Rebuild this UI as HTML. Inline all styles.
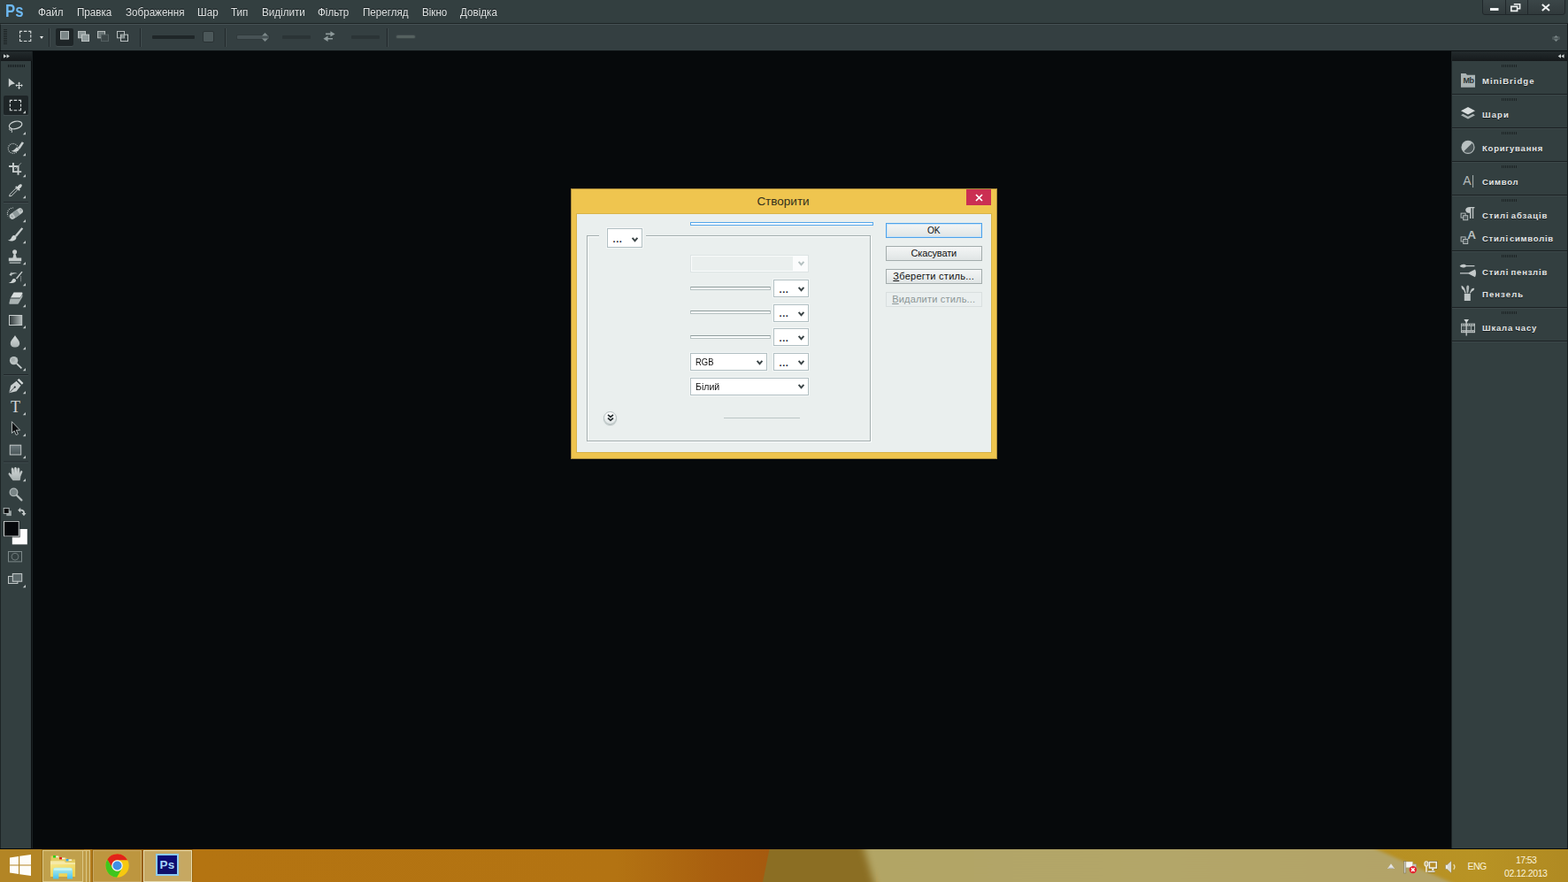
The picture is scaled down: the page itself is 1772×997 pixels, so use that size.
<!DOCTYPE html>
<html lang="uk">
<head>
<meta charset="utf-8">
<title>Створити</title>
<style>
*{box-sizing:border-box;margin:0;padding:0}
html,body{width:1772px;height:997px;overflow:hidden;background:#06090b}
body{position:relative;font-family:"Liberation Sans","DejaVu Sans",sans-serif;font-size:12px;color:#d9dddd}
.abs{position:absolute}
svg{position:absolute;overflow:visible}
/* ---------- menu bar ---------- */
#menubar{position:absolute;left:0;top:0;width:1772px;height:26px;background:#333f40}
#menubar .ps{position:absolute;left:5.700px;top:-0.200px;font-weight:bold;font-size:19.500px;line-height:24px;color:#6db8f1;transform:scaleX(.86);transform-origin:0 0}
#menubar .mi{position:absolute;top:7px;height:15px;line-height:15px;font-size:12.200px;color:#dfe3e3;text-shadow:0 -1px 0 #161b1d;white-space:nowrap;transform:scaleX(.955);transform-origin:0 0}
#menuline{position:absolute;left:0;top:26px;width:1772px;height:1px;background:#1d2425}
#winctl{position:absolute;left:1674.500px;top:-1px;width:94px;height:18px;border:1px solid #20272a;border-radius:0 0 3px 3px;background:linear-gradient(#3b4648,#313a3c)}
#winctl i{position:absolute;top:0;width:1px;height:16px;background:#20272a}
/* ---------- options bar ---------- */
#optbar{position:absolute;left:0;top:27px;width:1772px;height:30px;background:#343f41;border-top:1px solid #465154;border-left:1px solid #1d2425;border-right:1px solid #1d2425}
#optline{position:absolute;left:0;top:57px;width:1772px;height:1px;background:#0c1012}
.osep{position:absolute;top:32px;width:1px;height:21px;background:#20272a;box-shadow:1px 0 0 #414c4e}
.obar{position:absolute;top:40px;height:4px;background:#262e30;border-radius:1px}
/* ---------- tool panel ---------- */
#tools{position:absolute;left:0;top:58px;width:35px;height:901px;background:#333f40;border-left:1px solid #1d2425;box-shadow:1px 0 0 #0b0f11,2px 0 0 #192022}
#tools .hd{position:absolute;left:0;top:0;width:35px;height:11px;background:linear-gradient(#232b2d,#15191b)}
.tsep{position:absolute;left:4px;width:27px;height:1px;background:#20272a;box-shadow:0 1px 0 #424d4f}
.tri{position:absolute;width:0;height:0;border-left:3px solid transparent;border-bottom:3px solid #b9c0c0}
/* ---------- right panel ---------- */
#rpanel{position:absolute;left:1640px;top:58px;width:132px;height:901px;background:#333f40;border-left:1px solid #1d2425}
#rpanel .hd{position:absolute;left:0;top:0;width:131px;height:11px;background:linear-gradient(#232b2d,#15191b)}
.rsep{position:absolute;left:0;width:131px;height:1px;background:#1d2425;box-shadow:0 1px 0 #3f4a4c}
.grip{position:absolute;height:3px;background:repeating-linear-gradient(90deg,#1d2425 0,#1d2425 1px,transparent 1px,transparent 2px)}
.rl{position:absolute;left:35px;height:12px;line-height:12px;font-size:9.500px;font-weight:bold;letter-spacing:1px;color:#e3e6e6;white-space:nowrap;text-shadow:0 1px 0 #1a2022}
/* ---------- taskbar ---------- */
#taskbar{position:absolute;left:0;top:960px;width:1772px;height:37px;background:#b37412;overflow:hidden}
.tb{position:absolute;top:0;height:37px;border:1px solid #dcc888;background:#c0a04c;box-shadow:0 0 0 1px rgba(110,75,0,.35)}
.tray{position:absolute;color:#fbf3dc;font-size:11px;line-height:12px;white-space:nowrap}
/* ---------- dialog ---------- */
#dlg{position:absolute;left:645px;top:213px;width:482px;height:306px;background:#efc54f;border:1px solid #a98a3a}
.dtitle{font-size:13.500px;line-height:18px;color:#33301c;white-space:nowrap}
.sel{position:absolute;height:20px;background:#fff;border:1px solid #b1bfc2;box-shadow:0 0 0 1px #f3f6f6}
.thin{position:absolute;height:4px;background:#fbfdfd;border:1px solid #b7c2c2;border-top-color:#8f9c9c}
.dots{font-size:11px;line-height:14px;font-weight:bold;color:#1a1a2a;letter-spacing:0.600px}
.dtxt{font-size:11px;line-height:14px;color:#111;white-space:nowrap}
.btn{position:absolute;left:1001px;width:108.500px;height:16.500px;border:1px solid #a3acac;background:linear-gradient(#f4f6f6,#e0e5e5);font-size:11px;line-height:14px;text-align:center;color:#111;white-space:nowrap}
.btn span{display:inline-block;position:relative;top:0}
</style>
</head>
<body>

<!-- ================= MENU BAR ================= -->
<div id="menubar">
  <div class="ps">Ps</div>
  <div class="mi" style="left:43px">Файл</div>
  <div class="mi" style="left:87px">Правка</div>
  <div class="mi" style="left:142px">Зображення</div>
  <div class="mi" style="left:223px">Шар</div>
  <div class="mi" style="left:261px">Тип</div>
  <div class="mi" style="left:296px">Виділити</div>
  <div class="mi" style="left:359px">Фільтр</div>
  <div class="mi" style="left:410px">Перегляд</div>
  <div class="mi" style="left:477px">Вікно</div>
  <div class="mi" style="left:520px">Довідка</div>
  <div id="winctl"><i style="left:25px"></i><i style="left:50px"></i></div>
  <svg style="left:1683.500px;top:8.800px" width="10" height="3" viewBox="0 0 10 3"><rect width="9.500" height="3" fill="#eef1f1"/></svg>
  <svg style="left:1707px;top:4px" width="12" height="9" viewBox="0 0 12 9"><path d="M3.800 0.800h6.800v5h-2.200M0.800 3.400h6.800v5H0.800Z" fill="none" stroke="#eef1f1" stroke-width="1.600"/></svg>
  <svg style="left:1742px;top:5px" width="10" height="7" viewBox="0 0 10 7"><path d="M0.800 0L9 7M9 0L0.800 7" stroke="#eef1f1" stroke-width="2"/></svg>
</div>
<div id="menuline"></div>

<!-- ================= OPTIONS BAR ================= -->
<div id="optbar"></div>
<div id="optline"></div>

<!-- gripper -->
<div class="abs" style="left:4px;top:33px;width:4px;height:18px;background:repeating-linear-gradient(180deg,#1d2425 0,#1d2425 1px,transparent 1px,transparent 2px)"></div>
<!-- marquee tool preset -->
<svg style="left:22px;top:34px" width="14" height="14" viewBox="0 0 14 14"><path d="M0.55 3.90V1.30H3.15M10.15 1.30H12.75V3.90M12.75 9.90V12.50H10.15M3.15 12.50H0.55V9.90M4.85 1.30H8.45M4.85 12.50H8.45M0.55 5.30V8.50M12.75 5.30V8.50" fill="none" stroke="#d4d9d9" stroke-width="1.150"/></svg>
<div class="abs" style="left:45px;top:41px;width:0;height:0;border-left:2.5px solid transparent;border-right:2.5px solid transparent;border-top:3px solid #e8ebeb"></div>
<div class="osep" style="left:55px"></div>
<!-- selection mode buttons -->
<div class="abs" style="left:63px;top:32px;width:20px;height:20px;background:#1e2527;border-radius:2px;box-shadow:0 1px 0 #434e50"></div>
<svg style="left:68px;top:35px" width="10" height="9.600" viewBox="0 0 10 10" preserveAspectRatio="none"><rect x="0.5" y="0.5" width="9" height="9" fill="#7b8687" stroke="#b9c0c0"/></svg>
<svg style="left:88px;top:35px" width="13" height="12" viewBox="0 0 13 13" preserveAspectRatio="none"><rect x="0.5" y="0.5" width="8" height="8" fill="#8a9596" stroke="#b9c0c0"/><rect x="4.5" y="4.5" width="8" height="8" fill="#8f9a9b" stroke="#c3c9c9"/></svg>
<svg style="left:110px;top:35px" width="13" height="12" viewBox="0 0 13 13" preserveAspectRatio="none"><rect x="0.5" y="0.5" width="8" height="8" fill="#6c7778" stroke="#b9c0c0"/><rect x="4.5" y="4.500" width="8" height="8" fill="#3c4648" stroke="#566163"/></svg>
<svg style="left:132px;top:35px" width="13" height="12" viewBox="0 0 13 13" preserveAspectRatio="none"><rect x="0.5" y="0.5" width="8" height="8" fill="none" stroke="#b9c0c0"/><rect x="4.5" y="4.5" width="8" height="8" fill="none" stroke="#c3c9c9"/><rect x="5" y="5" width="3.5" height="3.5" fill="#7f8a8b"/></svg>
<div class="osep" style="left:158px"></div>
<div class="obar" style="left:172px;width:48px;background:#1f2628"></div>
<div class="abs" style="left:229px;top:35px;width:13px;height:13px;background:#4c585a;border:1px solid #2a3234;border-radius:2px"></div>
<div class="osep" style="left:254px"></div>
<div class="obar" style="left:268px;width:36px;background:#475255;box-shadow:0 0 0 1px #303a3c"></div>
<svg style="left:296px;top:37px" width="7" height="10" viewBox="0 0 7 10"><path d="M3.5 0L7 3.5H0Z M3.5 10L7 6.5H0Z" fill="#7e8a8b"/></svg>
<div class="obar" style="left:319px;width:32px;background:#2b3436"></div>
<svg style="left:365px;top:35px" width="14" height="12" viewBox="0 0 14 12"><path d="M3 2.600H8.400V0.200L13.600 3.400L8.400 6.600V4.200H3Z" fill="#8e9a9b"/><path d="M11 8H5.600V5.600L0.400 8.800L5.600 12V9.600H11Z" fill="#8e9a9b"/></svg>
<div class="obar" style="left:397px;width:32px;background:#2b3436"></div>
<div class="osep" style="left:437px"></div>
<div class="obar" style="left:448px;width:21px;background:#55615f;border-radius:2px;top:40px;height:3px;box-shadow:0 0 0 1px #3d4749"></div>
<svg style="left:1754px;top:40px" width="9" height="7" viewBox="0 0 9 7"><rect x="0" y="1" width="9" height="4" rx="1.5" fill="#4c5759"/><path d="M4.5 0L7 2.5H2Z M4.5 7L7 4.5H2Z" fill="#7d898a"/></svg>


<!-- ================= TOOLS ================= -->
<div id="tools"><div class="hd"></div>
</div>

<svg id="ticons" style="left:0;top:0" width="40" height="700" viewBox="0 0 40 700">
<defs>
<linearGradient id="gI" x1="0" y1="0" x2="0" y2="1"><stop offset="0" stop-color="#d9dede"/><stop offset="1" stop-color="#a9b2b2"/></linearGradient>
<linearGradient id="gGrad" x1="0" y1="0" x2="1" y2="0"><stop offset="0" stop-color="#2c3537"/><stop offset="1" stop-color="#b4bcbc"/></linearGradient>
<linearGradient id="gRect" x1="0" y1="0" x2="0" y2="1"><stop offset="0" stop-color="#69767a"/><stop offset="1" stop-color="#4a5658"/></linearGradient>
</defs>
<!-- collapse arrows -->
<path d="M4 61.3L7.3 63.5L4 65.7Z M7.6 61.3L10.9 63.5L7.6 65.7Z" fill="#cdd3d3"/>
<!-- gripper -->
<path d="M9.5 73v3M11.5 73v3M13.5 73v3M15.5 73v3M17.5 73v3M19.5 73v3M21.5 73v3M23.5 73v3M25.5 73v3M27.5 73v3" stroke="#171d1f" stroke-width="1"/>
<!-- selected tool bg -->
<rect x="4" y="108" width="28" height="22" rx="2" fill="#1e2527"/>
<rect x="4" y="130" width="28" height="1" fill="#424d4f"/>
<path d="M29 125V128.2H25.8Z" fill="#c3c9c9"/><path d="M29 149V152.2H25.8Z" fill="#c3c9c9"/><path d="M29 173V176.2H25.8Z" fill="#c3c9c9"/><path d="M29 197V200.2H25.8Z" fill="#c3c9c9"/><path d="M29 221V224.2H25.8Z" fill="#c3c9c9"/><path d="M29 248V251.2H25.8Z" fill="#c3c9c9"/><path d="M29 272V275.2H25.8Z" fill="#c3c9c9"/><path d="M29 296V299.2H25.8Z" fill="#c3c9c9"/><path d="M29 320V323.2H25.8Z" fill="#c3c9c9"/><path d="M29 344V347.2H25.8Z" fill="#c3c9c9"/><path d="M29 368V371.2H25.8Z" fill="#c3c9c9"/><path d="M29 392V395.2H25.8Z" fill="#c3c9c9"/><path d="M29 416V419.2H25.8Z" fill="#c3c9c9"/><path d="M29 442V445.2H25.8Z" fill="#c3c9c9"/><path d="M29 466V469.2H25.8Z" fill="#c3c9c9"/><path d="M29 490V493.2H25.8Z" fill="#c3c9c9"/><path d="M29 515V518.2H25.8Z" fill="#c3c9c9"/><path d="M29 541V544.2H25.8Z" fill="#c3c9c9"/><path d="M29 661V664.2H25.8Z" fill="#c3c9c9"/>
<!-- 1 move -->
<path d="M9.800 88.600V98.400L12.500 95.800L17 94.500Z" fill="#c9cfcf"/>
<path d="M21.600 92.600L23.200 94.600H22.100V96.100H24V95L25.800 96.600L24 98.200V97.100H22.100V98.800H23.200L21.600 100.900L20 98.800H21.100V97.100H19.200V98.200L17.400 96.600L19.200 95V96.100H21.100V94.600H20Z" fill="#d3d8d8"/>
<!-- 2 marquee -->
<path d="M11.40 115.90V113.30H14.00M20.90 113.30H23.50V115.90M23.50 122.10V124.70H20.90M14.00 124.70H11.40V122.10M15.65 113.30H19.25M15.65 124.70H19.25M11.40 117.40V120.60M23.50 117.40V120.60" fill="none" stroke="#d5dada" stroke-width="1.150"/>
<!-- 3 lasso -->
<ellipse cx="17.6" cy="141.4" rx="7.4" ry="4.1" transform="rotate(-14 17.6 141.4)" fill="none" stroke="#cfd5d5" stroke-width="1.2"/>
<path d="M11.6 144.6c-1.6 0.6-1.6 2.6 0.6 2.6c1.8 0 1.6-2 0-2.4M12.8 146.6c0.8 1 1 2 0.4 3.2" fill="none" stroke="#cfd5d5" stroke-width="1"/>
<!-- 4 quick select -->
<circle cx="14.800" cy="167.800" r="5.500" fill="none" stroke="#c4caca" stroke-width="1.200" stroke-dasharray="1 1.150"/>
<path d="M27 161.400L22.400 168.600L20.200 167L24.800 160.200Z" fill="#c9cfcf"/>
<path d="M12.800 170.600c2.200-0.400 4.400-1.800 5.800-4.200l3.400 2.200c-1.400 3-5.200 4.400-9.200 2Z" fill="#cbd1d1"/>
<!-- 5 crop -->
<path d="M14 184h1.900v9.300h8.300v1.800H14Z" fill="#c6cccc"/>
<path d="M10 187.100h11.500v10.700h-1.900V188.900H10Z" fill="#c6cccc"/>
<path d="M24 184.2L17 191.2" stroke="#aab3b3" stroke-width="0.8"/>
<!-- 6 eyedropper -->
<path d="M10.6 221.8l0.6-2.2l6.8-6.8l1.8 1.8l-6.8 6.8Z" fill="none" stroke="#c9cfcf" stroke-width="1"/>
<path d="M17.2 211.4l1.2-1.2l1 1l1.6-1.8c1-1.2 2.6-1.6 3.4-0.8c0.8 0.8 0.4 2.400-0.8 3.400l-1.800 1.600l1 1l-1.200 1.200Z" fill="#d0d5d5"/>
<!-- sep -->
<rect x="4" y="228" width="28" height="1" fill="#20272a"/><rect x="4" y="229" width="28" height="1" fill="#3f4a4c"/>
<!-- 7 healing -->
<clipPath id="hc"><path d="M0 230H15.600V236L9 244.500L12 249H0Z"/></clipPath><circle cx="14.600" cy="241.200" r="6.200" fill="none" stroke="#c4caca" stroke-width="1.200" stroke-dasharray="1 1.150" clip-path="url(#hc)"/>
<rect x="9.800" y="238.200" width="17" height="6.600" rx="3.300" transform="rotate(-34 18.3 241.500)" fill="#bfc6c6"/>
<rect x="15.300" y="238.200" width="6" height="6.600" transform="rotate(-34 18.3 241.500)" fill="#8e999a"/>
<path d="M12.600 244.400l1 1M14.400 245.400l-1-1.800M22.400 237.800l1 1M24.200 238l-1-1.600" stroke="#6f7b7c" stroke-width="0.8" transform="rotate(0)"/>
<!-- 8 brush -->
<path d="M26.200 258.400L18.800 267.800L16.800 266.200L24.400 257.200Z" fill="#c6cccc"/>
<path d="M8.800 271.600c2.600-0.200 3.600-1.400 4.600-3.800c0.800-1.800 3-2.200 4.200-1c1.400 1.400 1 3.200-0.600 4.400c-2.400 1.600-5.600 1.600-8.200 0.400Z" fill="#ced4d4"/>
<!-- 9 stamp -->
<circle cx="16.600" cy="284.800" r="2.500" fill="#c9cfcf"/>
<path d="M15.600 287h2l1.200 4.600h5.400v3.600h-14.400v-3.600h4.600Z" fill="#c2c9c9"/>
<rect x="10.600" y="296.400" width="12.800" height="1.400" fill="#aeb6b6"/>
<!-- 10 history brush -->
<path d="M25.600 307.400L19.200 315.400L18 314.400L24.400 306.800Z" fill="#c6cccc"/>
<path d="M9.600 319.400c2.400-0.200 3.200-1 4.200-3c0.800-1.400 2.600-1.800 3.600-0.800c1.200 1.200 0.800 2.600-0.600 3.400c-2 1.400-5 1.400-7.200 0.400Z" fill="#ced4d4"/>
<path d="M10.400 310.800L13.200 307.200V308.800c2.400-0.800 4.800-0.600 6.600 0.400c-2-0.200-4.400 0-6.600 1.200V312Z" fill="#bfc6c6"/>
<path d="M23.600 312.400V318.600" stroke="#c4caca" stroke-width="1" stroke-dasharray="1 1"/>
<!-- 11 eraser -->
<path d="M15.600 330.600h8.600c1 0 1.600 0.600 1.200 1.400l-2.600 4.400h-10.800Z" fill="#d9dede"/>
<path d="M11.600 337.400h10.800l3-5v3l-4.400 7.600c-0.400 0.600-0.800 0.800-1.600 0.800h-7.800c-1 0-1.400-0.600-1.200-1.400Z" fill="#a9b2b2"/>
<!-- 12 gradient -->
<rect x="10.500" y="356.500" width="14.200" height="11" fill="url(#gGrad)" stroke="#c6cccc" stroke-width="1"/>
<!-- 13 blur -->
<path d="M17 379c1.600 3 5.200 6 5.200 9.200c0 2.600-2.200 4.400-5.200 4.400s-5.200-1.800-5.200-4.400c0-3.200 3.600-6.200 5.200-9.200Z" fill="url(#gI)"/>
<!-- 14 dodge -->
<circle cx="15.600" cy="407.600" r="4.700" fill="#b9c1c1"/>
<circle cx="14.800" cy="406.800" r="2.200" fill="#a5aeae"/>
<path d="M18.800 410.800L24.400 416.400" stroke="#c9cfcf" stroke-width="1.800"/>
<!-- sep -->
<rect x="4" y="423" width="28" height="1" fill="#20272a"/><rect x="4" y="424" width="28" height="1" fill="#3f4a4c"/>
<!-- 15 pen -->
<path d="M10.200 444.200l2-8.400l6.400-5l5 5l-5 6.400Z" fill="#c9cfcf"/>
<path d="M10.600 443.800l5.800-5.800" stroke="#2a3335" stroke-width="0.900"/>
<circle cx="16.800" cy="437.600" r="1.100" fill="#2a3335"/>
<path d="M19.600 429.600l1.800-1.600l5 5l-1.600 1.800Z" fill="#d5dada"/>
<path d="M18.900 430.300l5 5" stroke="#333f40" stroke-width="0.800"/>
<!-- 17 path select -->
<path d="M13.400 476.600V489.600L16.200 487L18.200 491.600L20.400 490.600L18.400 486.200H22.600Z" fill="#0b0e10" stroke="#c3c9c9" stroke-width="0.900" stroke-linejoin="round"/>
<!-- 18 rectangle -->
<rect x="11.300" y="503.200" width="12.400" height="10.800" fill="url(#gRect)" stroke="#c3c9c9" stroke-width="1"/>
<!-- sep -->
<rect x="4" y="521.500" width="28" height="1" fill="#20272a"/><rect x="4" y="522.500" width="28" height="1" fill="#3f4a4c"/>
<!-- 19 hand -->
<path d="M14.600 542.700H22.300L23 538.200L25.100 533.200L24.300 532.100L23.100 533.400L21.900 536.600L21.800 529.700L20.800 528.700L19.900 529.700L19.600 535.400L18.400 529.100L17.400 528L16.500 529.100L16.300 535.400L15 529.800L13.900 528.700L13.100 529.900L13.700 537.600L11 534.700L9.900 535.200L10.200 536.500L13 540.600Z" fill="url(#gI)" stroke="#c3c9c9" stroke-width="0.700" stroke-linejoin="round"/>
<!-- 20 zoom -->
<circle cx="15.500" cy="556.400" r="4.300" fill="#7a8687" stroke="#aeb6b6" stroke-width="1.300"/>
<path d="M18.800 559.800L24.400 565.400" stroke="#b5bdbd" stroke-width="2.200" stroke-linecap="round"/>
<!-- default colors -->
<rect x="7.300" y="577.300" width="5.600" height="5.800" fill="#9aa4a4"/>
<rect x="4.200" y="574.400" width="6" height="6" fill="#07090b" stroke="#b9c0c0" stroke-width="0.900"/>
<!-- swap -->
<path d="M20.200 576.800L23.200 573.800V575.800c3.600 0 4.800 1.600 4.800 4.200h1.600L27 583.200L24.400 580h1.600c0-1.600-0.600-2.400-2.800-2.400V579.600Z" fill="#c3c9c9"/>
<!-- bg/fg -->
<rect x="13.800" y="598" width="17" height="17.400" fill="#fdfdfd"/>
<rect x="4.500" y="589.300" width="16.800" height="16.800" fill="#05070a" stroke="#d2d7d7" stroke-width="1"/>
<rect x="3.600" y="588.400" width="18.600" height="18.600" fill="none" stroke="#262d2f" stroke-width="0.800"/>
<!-- quick mask -->
<rect x="9.500" y="623.500" width="15" height="11.400" fill="none" stroke="#7d898a" stroke-width="1"/>
<circle cx="17" cy="629.200" r="3.900" fill="none" stroke="#6f7b7c" stroke-width="1"/>
<!-- screen mode -->
<rect x="9.500" y="651.500" width="10.400" height="8" fill="#59656780" stroke="#c0c6c6" stroke-width="1"/>
<rect x="14.300" y="648.600" width="10.400" height="8.600" fill="#5d696b" stroke="#c9cfcf" stroke-width="1"/>
</svg>
<div class="abs" style="left:11px;top:450px;width:13px;height:20px;font-family:'Liberation Serif','DejaVu Serif',serif;font-size:18px;line-height:20px;text-align:center;color:#cfd5d5">T</div>


<!-- ================= RIGHT PANEL ================= -->
<div id="rpanel"><div class="hd"></div>
</div>
<div class="abs" style="left:1641px;top:106px;width:131px;height:1px;background:#1b2123"></div><div class="abs" style="left:1641px;top:107px;width:131px;height:1px;background:#3d484a"></div>
<div class="abs" style="left:1641px;top:144px;width:131px;height:1px;background:#1b2123"></div><div class="abs" style="left:1641px;top:145px;width:131px;height:1px;background:#3d484a"></div>
<div class="abs" style="left:1641px;top:182px;width:131px;height:1px;background:#1b2123"></div><div class="abs" style="left:1641px;top:183px;width:131px;height:1px;background:#3d484a"></div>
<div class="abs" style="left:1641px;top:220px;width:131px;height:1px;background:#1b2123"></div><div class="abs" style="left:1641px;top:221px;width:131px;height:1px;background:#3d484a"></div>
<div class="abs" style="left:1641px;top:283px;width:131px;height:1px;background:#1b2123"></div><div class="abs" style="left:1641px;top:284px;width:131px;height:1px;background:#3d484a"></div>
<div class="abs" style="left:1641px;top:347px;width:131px;height:1px;background:#1b2123"></div><div class="abs" style="left:1641px;top:348px;width:131px;height:1px;background:#3d484a"></div>
<div class="abs" style="left:1641px;top:385px;width:131px;height:1px;background:#1b2123"></div><div class="abs" style="left:1641px;top:386px;width:131px;height:1px;background:#3d484a"></div>
<div class="grip" style="left:1697px;top:73px;width:18px"></div>
<div class="grip" style="left:1697px;top:111px;width:18px"></div>
<div class="grip" style="left:1697px;top:149px;width:18px"></div>
<div class="grip" style="left:1697px;top:187px;width:18px"></div>
<div class="grip" style="left:1697px;top:225px;width:18px"></div>
<div class="grip" style="left:1697px;top:288px;width:18px"></div>
<div class="grip" style="left:1697px;top:352px;width:18px"></div>
<div class="rl" style="left:1675px;top:86.3px;letter-spacing:1.04px">MiniBridge</div>
<div class="rl" style="left:1675px;top:124.1px;letter-spacing:1.1px">Шари</div>
<div class="rl" style="left:1675px;top:162.1px;letter-spacing:0.77px">Коригування</div>
<div class="rl" style="left:1675px;top:199.9px;letter-spacing:0.69px">Символ</div>
<div class="rl" style="left:1675px;top:237.8px;letter-spacing:0.88px;word-spacing:-1.2px">Стилі абзаців</div>
<div class="rl" style="left:1675px;top:263.7px;letter-spacing:0.75px;word-spacing:-2.2px">Стилі символів</div>
<div class="rl" style="left:1675px;top:301.9px;letter-spacing:0.83px;word-spacing:-1.2px">Стилі пензлів</div>
<div class="rl" style="left:1675px;top:327.1px;letter-spacing:1.08px">Пензель</div>
<div class="rl" style="left:1675px;top:365.3px;letter-spacing:0.83px;word-spacing:-1px">Шкала часу</div>

<svg id="ricons" style="left:0;top:0" width="1772" height="400" viewBox="0 0 1772 400">
<!-- collapse arrows -->
<path d="M1764 61.300L1760.700 63.500L1764 65.700Z M1767.600 61.300L1764.300 63.500L1767.600 65.700Z" fill="#cdd3d3"/>
<!-- Mb folder -->
<path d="M1651 83h5.500l1.500 1.800h9V98.800h-16Z" fill="#aab3b3"/>
<!-- layers -->
<path d="M1659 121l8 4.300l-8 4.300l-8-4.300Z" fill="#d8dddd"/>
<path d="M1653.400 128.800l5.600 3l5.600-3l2.400 1.400l-8 4.400l-8-4.400Z" fill="#a9b2b2"/>
<!-- adjustments -->
<circle cx="1659" cy="166.400" r="7" fill="#4a5557" stroke="#b3bbbb" stroke-width="1.200"/>
<path d="M1663.950 161.450A7 7 0 0 0 1654.050 171.350Z" fill="#b9c1c1"/>
<!-- A| -->
<path d="M1664.600 198v14" stroke="#aab3b3" stroke-width="1"/>
<!-- paragraph styles -->
<path d="M1661 247v-6.200c-3 0-4.800-1.400-4.800-3.400c0-2 1.800-3.400 4.800-3.400h5.400v1.200h-1.200V247h-1.300v-11.800h-1.500V247Z" fill="#c3c9c9"/>
<rect x="1651.100" y="241.100" width="5" height="5" fill="#333f40" stroke="#b3bbbb" stroke-width="1"/>
<rect x="1653.700" y="243.700" width="5" height="5" fill="#4c5759" stroke="#b3bbbb" stroke-width="1"/>
<!-- char styles -->
<rect x="1651.100" y="267.900" width="5" height="5" fill="#333f40" stroke="#b3bbbb" stroke-width="1"/>
<rect x="1653.700" y="270.500" width="5" height="5" fill="#4c5759" stroke="#b3bbbb" stroke-width="1"/>
<!-- brush presets -->
<path d="M1649.600 300.800c2-2.600 5.600-2.800 7.400-0.800h9.400v1.200h-9.400c-2 1.800-5.400 1.800-7.400-0.400Z" fill="#c3c9c9"/>
<path d="M1650 308.200h9.600l7.400-3.600c1.400 2.600 1.400 6 0 8.600l-7.400-3.600h-9.600Z" fill="#c3c9c9"/>
<!-- brush -->
<path d="M1654.800 332h7v8h-7Z" fill="#bfc6c6"/>
<path d="M1655.400 331.400l-1.200-3.400c-1.800-0.400-3-2.400-2.600-5.200c2 1 3.600 2.600 4 4.800l1.200 3.800Z" fill="#c3c9c9"/>
<path d="M1657.600 331.400l-0.400-6.200c0-1.600 0.600-2.800 1.600-2.800s1.600 1.200 1.400 2.800l-1 6.200Z" fill="#aeb6b6"/>
<path d="M1660.600 331.400l1.800-3.600c0.600-1.600 2.200-2.400 3.800-1.800c-0.200 2-1.400 3.200-3 3.400l-1.400 2.200Z" fill="#c3c9c9"/>
<!-- timeline -->
<rect x="1651" y="365.600" width="16" height="3" fill="#b9c1c1"/>
<rect x="1651" y="373.200" width="16" height="3" fill="#c3c9c9"/>
<path d="M1652 367h14" stroke="#46524f" stroke-width="1.400" stroke-dasharray="0.800 1"/>
<path d="M1652 374.700h14" stroke="#20282a" stroke-width="1" stroke-dasharray="0.800 1.100"/>
<path d="M1651.500 368v6M1662.600 368v6M1666.500 368v6" stroke="#aab3b3" stroke-width="1"/>
<rect x="1652.600" y="369.400" width="9" height="3" fill="#4c5759"/>
<path d="M1654.400 361h5.600l-2.300 3.400h-1Z" fill="#cfd5d5"/>
<path d="M1657.200 364v15.400" stroke="#c3c9c9" stroke-width="1.300"/>
</svg>
<div class="abs" style="left:1652px;top:86px;width:15px;height:11px;font-size:9px;line-height:11px;font-weight:bold;color:#2a3335;text-align:center;letter-spacing:-0.5px">Mb</div>
<div class="abs" style="left:1652px;top:196px;width:12px;height:16px;font-size:14px;line-height:16px;color:#b3bbbb;text-align:center">A</div>
<div class="abs" style="left:1657.500px;top:258px;width:11px;height:16px;font-size:13.500px;font-weight:bold;line-height:16px;color:#b9c0c0;text-align:center">A</div>


<div class="abs" style="left:1771px;top:27px;width:1px;height:932px;background:#161c1e"></div>
<!-- ================= DIALOG ================= -->
<div id="dlg"></div>
<div class="abs dtitle" style="left:785px;top:219px;width:200px;text-align:center">Створити</div>
<div class="abs" style="left:1092px;top:214px;width:28px;height:18px;background:#cb2f52"></div>
<svg style="left:1102px;top:219px" width="9" height="9" viewBox="0 0 9 9"><path d="M1 1L8 8M8 1L1 8" stroke="#fff" stroke-width="1.700"/></svg>
<div class="abs" style="left:652px;top:242px;width:468px;height:269px;background:#eaefee;box-shadow:0 0 0 1px #d9b44a"></div>
<!-- group box -->
<div class="abs" style="left:663px;top:266px;width:321px;height:233px;border:1px solid #a3aeae;box-shadow:1px 1px 0 #fbfdfd, inset 1px 1px 0 #fbfdfd"></div>
<div class="abs" style="left:677px;top:264px;width:53px;height:5px;background:#eaefee"></div>
<!-- preset combo -->
<div class="sel" style="left:686px;top:258px;width:40px;height:22px"></div>
<div class="abs dots" style="left:692.5px;top:263.0px">...</div><svg style="left:714px;top:267.5px" width="7" height="6" viewBox="0 0 7 6"><path d="M0.6 0.8L3.5 4.200L6.400 0.800" fill="none" stroke="#3a4446" stroke-width="1.900"/></svg>
<!-- name input (focused) -->
<div class="abs" style="left:780px;top:251px;width:207px;height:4px;background:#fff;border:1px solid #55a7ea"></div>
<!-- disabled combo -->
<div class="abs" style="left:780px;top:288px;width:134px;height:20px;background:#eaefee;border:1px solid #dde4e4;box-shadow:inset 0 0 0 1px #fafcfc"></div>
<div class="abs" style="left:896px;top:290px;width:16px;height:16px;background:#fbfcfc"></div>
<svg style="left:902px;top:295.0px" width="7" height="6" viewBox="0 0 7 6"><path d="M0.6 0.8L3.5 4.200L6.400 0.800" fill="none" stroke="#b4c0c0" stroke-width="1.900"/></svg>
<!-- rows -->
<div class="thin" style="left:780px;top:323.8px;width:90.500px"></div>
<div class="sel" style="left:874px;top:316px;width:40px"></div><div class="abs dots" style="left:880.5px;top:319.8px">...</div><svg style="left:902.2px;top:324.1px" width="7" height="6" viewBox="0 0 7 6"><path d="M0.6 0.8L3.5 4.200L6.400 0.800" fill="none" stroke="#3a4446" stroke-width="1.900"/></svg>
<div class="thin" style="left:780px;top:351.4px;width:90.500px"></div>
<div class="sel" style="left:874px;top:343.6px;width:40px"></div><div class="abs dots" style="left:880.5px;top:347.4px">...</div><svg style="left:902.2px;top:351.7px" width="7" height="6" viewBox="0 0 7 6"><path d="M0.6 0.8L3.5 4.200L6.400 0.800" fill="none" stroke="#3a4446" stroke-width="1.900"/></svg>
<div class="thin" style="left:780px;top:379.0px;width:90.500px"></div>
<div class="sel" style="left:874px;top:371.2px;width:40px"></div><div class="abs dots" style="left:880.5px;top:375.0px">...</div><svg style="left:902.2px;top:379.3px" width="7" height="6" viewBox="0 0 7 6"><path d="M0.6 0.8L3.5 4.200L6.400 0.800" fill="none" stroke="#3a4446" stroke-width="1.900"/></svg>
<div class="sel" style="left:780px;top:399px;width:87px"></div><div class="abs dtxt" style="left:786px;top:402px;transform:scaleX(.86);transform-origin:0 0">RGB</div><svg style="left:855px;top:406.5px" width="7" height="6" viewBox="0 0 7 6"><path d="M0.6 0.8L3.5 4.200L6.400 0.800" fill="none" stroke="#3a4446" stroke-width="1.900"/></svg>
<div class="sel" style="left:874px;top:399px;width:40px"></div><div class="abs dots" style="left:880.5px;top:402.8px">...</div><svg style="left:902.2px;top:406.5px" width="7" height="6" viewBox="0 0 7 6"><path d="M0.6 0.8L3.5 4.200L6.400 0.800" fill="none" stroke="#3a4446" stroke-width="1.900"/></svg>
<div class="sel" style="left:780px;top:426.500px;width:134px"></div><div class="abs dtxt" style="left:786px;top:429.500px;transform:scaleX(.96);transform-origin:0 0">Білий</div><svg style="left:902.2px;top:434.0px" width="7" height="6" viewBox="0 0 7 6"><path d="M0.6 0.8L3.5 4.200L6.400 0.800" fill="none" stroke="#3a4446" stroke-width="1.900"/></svg>
<!-- advanced toggle -->
<div class="abs" style="left:682px;top:464.500px;width:15px;height:15px;border-radius:50%;background:linear-gradient(#fdfefe,#dfe5e5);border:1px solid #b3bdbd;box-shadow:0 1px 1px rgba(120,135,135,.5)"></div>
<svg style="left:685.500px;top:468px" width="8" height="9" viewBox="0 0 8 9"><path d="M1 0.800L4 3.400L7 0.800M1 4.600L4 7.200L7 4.600" fill="none" stroke="#222a2c" stroke-width="1.600"/></svg>
<div class="abs" style="left:817.500px;top:471.500px;width:86.500px;height:1px;background:#bcc6c6"></div>
<!-- buttons -->
<div class="btn" style="top:252px;border-color:#4fa3ea;box-shadow:inset 0 0 0 1px #c6e2f8"><span style="font-size:10.200px">OK</span></div>
<div class="btn" style="top:278px"><span style="letter-spacing:-0.150px">Скасувати</span></div>
<div class="btn" style="top:304px"><span style="letter-spacing:0.260px"><u>З</u>берегти стиль...</span></div>
<div class="btn" style="top:330px;border-color:#d9dfdf;background:#eaefef;color:#8d9797"><span style="letter-spacing:0.200px"><u>В</u>идалити стиль...</span></div>

<!-- ================= TASKBAR ================= -->
<div id="taskbar">

<svg style="left:0;top:0" width="1772" height="37" viewBox="0 0 1772 37">
<defs>
<linearGradient id="tbO" gradientUnits="userSpaceOnUse" x1="0" y1="0" x2="870" y2="0"><stop offset="0" stop-color="#b38525"/><stop offset="0.055" stop-color="#b38525"/><stop offset="0.12" stop-color="#b27a1c"/><stop offset="0.185" stop-color="#b06c10"/><stop offset="0.255" stop-color="#b47411"/><stop offset="0.8" stop-color="#b37312"/><stop offset="0.93" stop-color="#a95f0f"/><stop offset="1" stop-color="#a55a0f"/></linearGradient>
<linearGradient id="tbT" x1="0" y1="0" x2="1" y2="0"><stop offset="0" stop-color="#b2a565"/><stop offset="0.5" stop-color="#b3a669"/><stop offset="1" stop-color="#b3a367"/></linearGradient>
<linearGradient id="tbR" x1="0" y1="0" x2="1" y2="0"><stop offset="0" stop-color="#b78f23"/><stop offset="0.55" stop-color="#b89324"/><stop offset="1" stop-color="#b08a22"/></linearGradient>
<filter id="bl" x="-5%" y="-50%" width="110%" height="200%"><feGaussianBlur stdDeviation="4.500 0"/></filter>
</defs>
<rect x="860" y="0" width="130" height="37" fill="#8b6e23"/>
<path d="M0 0H869.500L862 37H0Z" fill="url(#tbO)"/>
<rect x="1540" y="0" width="232" height="37" fill="url(#tbR)"/>
<g filter="url(#bl)">
<path d="M976 -2H1551L1643 39H988Z" fill="url(#tbT)"/>
</g>
</svg>
<!-- start -->
<svg style="left:11px;top:6px" width="24" height="24" viewBox="0 0 24 24"><path d="M0 3.400L10 2V11.400H0Z M11.200 1.800L24 0V11.400H11.200Z M0 12.600H10V22L0 20.600Z M11.200 12.600H24V24L11.200 22.200Z" fill="#fdfcf8"/></svg>
<!-- explorer button -->
<div class="tb" style="left:48px;width:46px;top:1px;height:36px"></div>
<div class="abs" style="left:94px;top:1px;width:4px;height:36px;background:#bf9c47;border-right:1px solid #dcc888;border-top:1px solid #dcc888"></div>
<div class="abs" style="left:98px;top:1px;width:4px;height:36px;background:#bf9c47;border-right:1px solid #dcc888;border-top:1px solid #dcc888"></div>
<svg style="left:56px;top:6px" width="30" height="28" viewBox="0 0 30 28">
<path d="M1.500 1.600h8l2 2h7l2 2h8.500V24H1.500Z" fill="#e3cb62"/>
<rect x="4" y="1" width="3.200" height="2.600" fill="#2fd018"/><rect x="7.200" y="1.600" width="3" height="1.600" fill="#f6f2e2"/>
<rect x="11" y="3" width="3" height="2.400" fill="#e0241c"/><rect x="14" y="3.600" width="3.400" height="1.600" fill="#f6f2e2"/>
<rect x="18.600" y="5" width="3" height="2.400" fill="#37a7ee"/><rect x="21.600" y="5.400" width="3.400" height="1.600" fill="#f6f2e2"/>
<linearGradient id="fF" x1="0" y1="0" x2="0.400" y2="1"><stop offset="0" stop-color="#f8ec96"/><stop offset="1" stop-color="#efd250"/></linearGradient><linearGradient id="fB" x1="0" y1="0" x2="0" y2="1"><stop offset="0" stop-color="#b4f0ea"/><stop offset="1" stop-color="#4cc2ee"/></linearGradient><path d="M1 7.400h15.500l1.500 1.800h11V25H1Z" fill="url(#fF)"/>
<path d="M1 7.400h15.500l1.500 1.800h11V11H1Z" fill="#f6eaa8"/>
<path d="M4 27.400V17.500c0-1.700 1-2.700 2.700-2.700h16.600c1.700 0 2.700 1 2.700 2.700V27.400h-6v-6.200h-9.600V27.400Z" fill="url(#fB)"/>
<path d="M5 16.500c0-0.600 0.600-1 1.700-1h16.600c1.100 0 1.700 0.400 1.700 1v1.200H5Z" fill="#c9f6f0"/>
</svg>
<!-- chrome button -->
<div class="tb" style="left:104.500px;width:55px;top:1px;height:36px;background:#bd963f;border-color:#c9aa66"></div>
<svg style="left:118.500px;top:5.300px" width="27" height="27" viewBox="-13.500 -13.500 27 27">
<circle r="13.200" fill="#f6c90f"/>
<path d="M-11.200 -6.990A13.200 13.200 0 0 1 11.650 -6.200L0 -6.200A6.200 6.200 0 0 0 -5.370 3.100Z" fill="#e2231a"/>
<path d="M-0.460 13.190A13.200 13.200 0 0 1 -11.200 -6.990L-5.370 3.100A6.200 6.200 0 0 0 5.370 3.100Z" fill="#3fc61d"/>
<circle r="6.200" fill="#f2f6fa"/>
<circle r="5" fill="#3f8fe6"/>
</svg>
<!-- ps button -->
<div class="tb" style="left:162px;width:54.500px;top:1px;height:36px;background:#c6a862;border-color:#e6dbb0"></div>
<div class="abs" style="left:176px;top:5px;width:26px;height:24.500px;background:linear-gradient(#0a0a78,#101068);border:2px solid #8ccbf4"></div>
<div class="abs" style="left:176px;top:9.500px;width:26px;height:16px;text-align:center;font-weight:bold;font-size:13.500px;line-height:16px;color:#a9d8fa;letter-spacing:0.300px">Ps</div>
<!-- tray -->
<svg style="left:1567.500px;top:16.300px" width="8" height="6" viewBox="0 0 8 6"><path d="M0 6L4 0.300L8 6Z" fill="#e4e4e4"/><path d="M0.800 6L1.600 4.800H6.400L7.200 6Z" fill="#b4b4b4"/></svg>
<svg style="left:1586px;top:12.500px" width="16" height="15" viewBox="0 0 16 15">
<rect x="0.600" y="0.600" width="2.200" height="13.400" fill="#c9c9c4" stroke="#7d7350" stroke-width="0.500"/>
<path d="M10.400 3.600h4.200v4.800h-4.200Z" fill="#c4c4c0" stroke="#8a8060" stroke-width="0.400"/>
<path d="M2.800 1h7.800v6.800H2.800Z" fill="#f7f7f5" stroke="#a59c7c" stroke-width="0.400"/>
<circle cx="10.800" cy="10.100" r="4.200" fill="#e5202c"/>
<path d="M9 8.300L12.600 11.900M12.600 8.300L9 11.900" stroke="#fff" stroke-width="1.500"/>
</svg>
<svg style="left:1608.500px;top:12.500px" width="16" height="14" viewBox="0 0 16 14">
<rect x="6.300" y="1.500" width="8" height="6.600" fill="none" stroke="#6a5a28" stroke-width="2.600"/>
<rect x="6.300" y="1.500" width="8" height="6.600" fill="#b38a28" stroke="#f0efe6" stroke-width="1.600"/>
<path d="M10.300 8.600v3" stroke="#f0efe6" stroke-width="2"/>
<path d="M4.600 12.200h8" stroke="#6a5a28" stroke-width="2.400"/>
<path d="M4.600 12.200h8" stroke="#f0efe6" stroke-width="1.500"/>
<ellipse cx="2.900" cy="3.500" rx="2" ry="2.700" fill="#c2b078" stroke="#f0efe6" stroke-width="1.100"/>
<path d="M2.900 6.200V12.800" stroke="#f0efe6" stroke-width="1.500"/>
</svg>
<svg style="left:1632.500px;top:12.500px" width="13" height="14" viewBox="0 0 13 14">
<path d="M0.500 4.400h2.300L7 0.400V13.600L2.800 9.600H0.500Z" fill="#eeeee8" stroke="#8d8468" stroke-width="0.600"/>
<path d="M2.800 4.400L7 0.400V13.600L2.800 9.600Z" fill="#d9d9d2"/>
<path d="M9.700 4.200c1.400 1.600 1.400 4 0 5.600" stroke="#e9dfb6" stroke-width="1.300" fill="none"/>
</svg>
<div class="tray" style="left:1658.500px;top:12.800px;font-size:10.500px;letter-spacing:-0.600px">ENG</div>
<div class="tray" style="left:1713px;top:5.600px;font-size:10.500px;letter-spacing:-0.600px">17:53</div>
<div class="tray" style="left:1700px;top:20.800px;font-size:10.500px;letter-spacing:-0.400px">02.12.2013</div>

</div>

</body>
</html>
